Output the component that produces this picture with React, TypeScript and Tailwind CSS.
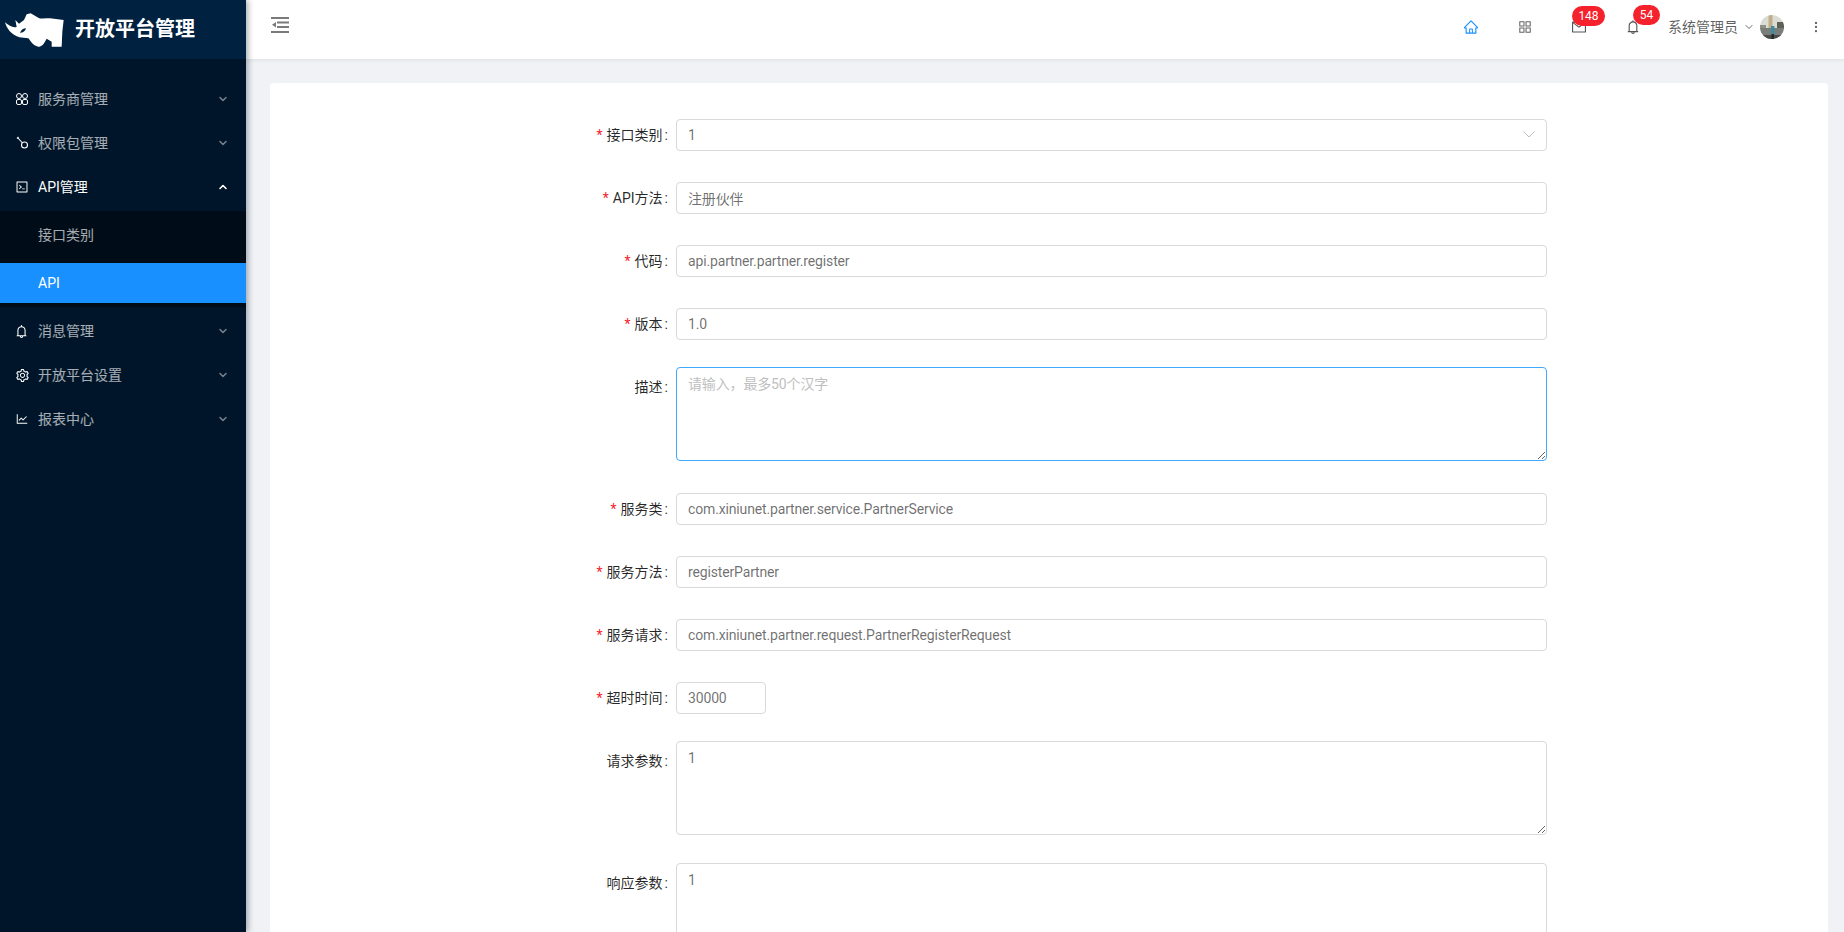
import React from "react";
import { ChevronDown, ChevronUp, EllipsisVertical } from "lucide-react";
import {
  AiOutlineAppstore,
  AiOutlineBell,
  AiOutlineCode,
  AiOutlineHome,
  AiOutlineLineChart,
  AiOutlineMail,
  AiOutlineSetting,
} from "react-icons/ai";

const fontStack = "font-['Roboto','Noto_Sans_CJK_SC',sans-serif]";

const ClusterIcon = () => (
  <svg width="14" height="14" viewBox="0 0 14 14" fill="none" stroke="currentColor" strokeWidth="1">
    <circle cx="4" cy="4" r="2.5" />
    <circle cx="10" cy="4" r="2.5" />
    <rect x="1.5" y="7.5" width="5" height="5" rx="1.5" />
    <rect x="7.5" y="7.5" width="5" height="5" rx="1.5" />
  </svg>
);

const KeyIcon = () => (
  <svg width="14" height="14" viewBox="0 0 14 14" fill="none" stroke="currentColor" strokeWidth="1.1">
    <circle cx="9.5" cy="9" r="3" />
    <path d="M7.5 7 L2.5 1.5 M2 2.5 L3.5 1" />
  </svg>
);

const Rhino = () => (
  <svg width="70" height="50" viewBox="0 0 210 150" fill="#fff" className="blur-[0.3px]">
    <path d="M15 52 C20 70 32 88 58 97 L85 100 C92 108 98 122 115 125 C125 125 130 118 135 110 L140 101 L155 110 L155 125 L185 125 L187 80 L191 45 L150 40 C135 40 122 42 115 38 L92 25 L80 28 L72 45 L57 56 L46 45 L50 66 C38 70 28 62 15 52 Z" />
    <path d="M60 83 C64 74 70 70 78 70 C76 78 70 84 60 83 Z" fill="#002140" />
  </svg>
);

const Avatar = () => (
  <svg width="24" height="24" viewBox="0 0 24 24" className="rounded-full">
    <rect width="24" height="24" fill="#dcdcd6" />
    <rect x="17" y="7" width="7" height="7" fill="#5d6259" />
    <rect x="0" y="10" width="6" height="4" fill="#8d9184" />
    <rect y="13" width="24" height="11" fill="#7a7d79" />
    <rect y="20" width="24" height="4" fill="#4a4c4a" />
    <rect x="8.5" y="0" width="4" height="13" fill="#c2ad8a" />
    <rect x="11" y="11" width="3.5" height="8" fill="#3f8c9c" />
    <rect x="11.5" y="19" width="2.5" height="5" fill="#23282c" />
  </svg>
);

interface MenuItem {
  label: string;
  icon: React.ReactNode;
  open?: boolean;
}

const MenuRow = ({ label, icon, open }: MenuItem) => (
  <div className={`h-10 mb-1 flex items-center pl-[15px] pr-[17px] text-sm ${open ? "text-white" : "text-white/65"}`}>
    <span className="w-[23px] flex items-center text-white">{icon}</span>
    <span className="flex-1">{label}</span>
    {open ? (
      <ChevronUp size={12} strokeWidth={3.2} className="text-white" />
    ) : (
      <ChevronDown size={12} strokeWidth={3.2} className="text-white/45" />
    )}
  </div>
);

const Sidebar = () => (
  <aside className="w-[246px] shrink-0 h-full bg-[#001529] shadow-[2px_0_6px_rgba(0,21,41,0.35)] z-20">
    <div className="h-[59px] bg-[#002140] flex items-start">
      <div className="mt-[5px] flex"><Rhino /></div>
      <span className="ml-[5px] mt-[15px] text-xl font-bold text-white">开放平台管理</span>
    </div>
    <nav className="pt-5">
      <MenuRow label="服务商管理" icon={<ClusterIcon />} />
      <MenuRow label="权限包管理" icon={<KeyIcon />} />
      <MenuRow label="API管理" icon={<AiOutlineCode size={14} />} open />
      <div className="bg-[#000c17] py-1">
        <div className="h-10 mb-2 flex items-center pl-[38px] text-sm text-white/65">接口类别</div>
        <div className="h-10 flex items-center pl-[38px] text-sm text-white bg-[#1890ff]">API</div>
      </div>
      <div className="h-1" />
      <MenuRow label="消息管理" icon={<AiOutlineBell size={15} className="-ml-px" />} />
      <MenuRow label="开放平台设置" icon={<AiOutlineSetting size={15} />} />
      <MenuRow label="报表中心" icon={<AiOutlineLineChart size={14} />} />
    </nav>
  </aside>
);

const Badge = ({ text, className }: { text: string; className: string }) => (
  <span className={`absolute -top-[14px] h-5 rounded-full bg-[#f5222d] text-white text-xs leading-5 text-center ${className}`}>
    {text}
  </span>
);

const Header = () => (
  <header className="h-[59px] bg-white shadow-[0_1px_4px_rgba(0,21,41,0.08)] flex items-center z-10 pl-[25px] shrink-0">
    <svg width="18" height="16" viewBox="0 0 18 16" className="text-[#7a7a7a] -mt-[9px]" fill="currentColor">
      <rect y="0" width="18" height="2" />
      <rect x="6" y="4.5" width="12" height="2" />
      <rect x="6" y="9" width="12" height="2" />
      <rect y="14" width="18" height="2" />
      <path d="M1 7.7 L5 5 V10.5 Z" />
    </svg>
    <div className="ml-auto flex items-center h-full pb-[5px] text-[rgba(0,0,0,0.65)]">
      <AiOutlineHome size={16} className="text-[#1890ff]" />
      <AiOutlineAppstore size={16} className="ml-[38px] text-[#666]" />
      <span className="relative ml-[38px] flex text-[#555]">
        <AiOutlineMail size={16} />
        <Badge text="148" className="left-[1px] w-[33px] !-top-[13px]" />
      </span>
      <span className="relative ml-[38px] flex text-[#555]">
        <AiOutlineBell size={16} />
        <Badge text="54" className="left-[8px] w-[27px]" />
      </span>
      <span className="ml-[27px] text-sm">系统管理员</span>
      <ChevronDown size={12} strokeWidth={1.8} className="ml-[5px] text-[#555]" />
      <span className="ml-[5px] flex"><Avatar /></span>
      <EllipsisVertical size={14} strokeWidth={2} className="ml-[25px] mr-[21px] text-[#666]" />
    </div>
  </header>
);

const inputBase =
  "block w-full border rounded px-[11px] text-sm tracking-[-0.15px] text-[rgba(0,0,0,0.58)] bg-white outline-none";

const FieldRow = ({
  label,
  required,
  className,
  top,
  children,
}: {
  label: string;
  required?: boolean;
  className: string;
  top?: boolean;
  children: React.ReactNode;
}) => (
  <div className={`flex ${top ? "items-start" : "items-center"} ${className}`}>
    <label className={`w-[398px] shrink-0 text-right text-sm text-[rgba(0,0,0,0.85)] ${top ? "leading-8 mt-1" : ""}`}>
      {required && <span className="text-[#f5222d] mr-1">*</span>}
      {label}
      <span className="ml-[2px] mr-2">:</span>
    </label>
    <div className="flex-1 min-w-0">{children}</div>
  </div>
);

const TextField = ({ value }: { value: string }) => (
  <input readOnly value={value} className={`${inputBase} border-[#d9d9d9] h-8`} />
);

const App = () => (
  <div className={`h-screen flex overflow-hidden ${fontStack}`}>
    <Sidebar />
    <div className="flex-1 min-w-0 flex flex-col bg-[#f0f2f5]">
      <Header />
      <main className="flex-1 min-h-0 pt-6 pr-4 pl-6 overflow-hidden">
        <div className="bg-white rounded-sm pt-9 pr-[281px] pl-[8px] h-[900px]">
          <FieldRow label="接口类别" required className="mb-[31px]">
            <div className={`${inputBase} border-[#d9d9d9] h-8 flex items-center justify-between`}>
              <span>1</span>
              <svg width="12" height="7" viewBox="0 0 12 7" fill="none" stroke="#bfbfbf" strokeWidth="1" className="-mt-[2px]">
                <path d="M0.5 0.5 L6 6 L11.5 0.5" />
              </svg>
            </div>
          </FieldRow>
          <FieldRow label="API方法" required className="mb-[31px]">
            <TextField value="注册伙伴" />
          </FieldRow>
          <FieldRow label="代码" required className="mb-[31px]">
            <TextField value="api.partner.partner.register" />
          </FieldRow>
          <FieldRow label="版本" required className="mb-[27px]">
            <TextField value="1.0" />
          </FieldRow>
          <FieldRow label="描述" top className="mb-8">
            <textarea
              readOnly
              placeholder="请输入，最多50个汉字"
              className={`${inputBase} border-[#40a9ff] h-[94px] py-[5px] leading-[22px] placeholder:text-[#bfbfbf]`}
            />
          </FieldRow>
          <FieldRow label="服务类" required className="mb-[31px]">
            <TextField value="com.xiniunet.partner.service.PartnerService" />
          </FieldRow>
          <FieldRow label="服务方法" required className="mb-[31px]">
            <TextField value="registerPartner" />
          </FieldRow>
          <FieldRow label="服务请求" required className="mb-[31px]">
            <TextField value="com.xiniunet.partner.request.PartnerRegisterRequest" />
          </FieldRow>
          <FieldRow label="超时时间" required className="mb-[27px]">
            <input readOnly value="30000" className={`${inputBase} border-[#d9d9d9] h-8 !w-[90px]`} />
          </FieldRow>
          <FieldRow label="请求参数" top className="mb-[28px]">
            <textarea readOnly value="1" className={`${inputBase} border-[#d9d9d9] h-[94px] py-[5px] leading-[22px]`} />
          </FieldRow>
          <FieldRow label="响应参数" top className="mb-6">
            <textarea readOnly value="1" className={`${inputBase} border-[#d9d9d9] h-[94px] py-[5px] leading-[22px]`} />
          </FieldRow>
        </div>
      </main>
    </div>
  </div>
);

export default App;
